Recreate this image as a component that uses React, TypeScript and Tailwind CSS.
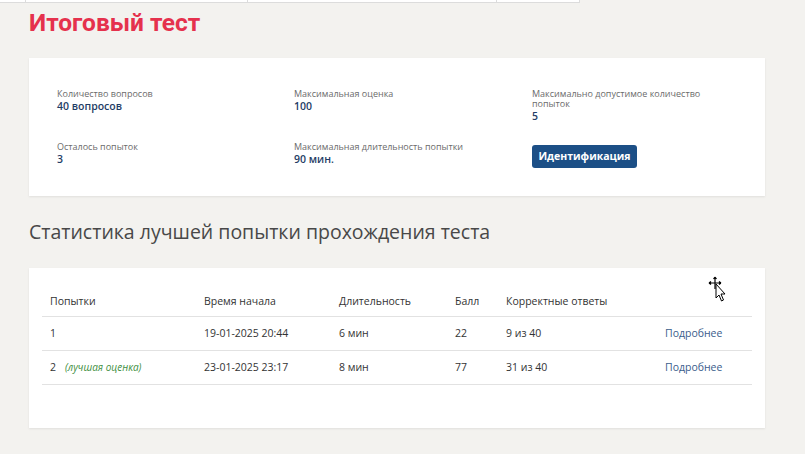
import React from 'react';

const infoItems = [
  { label: 'Количество вопросов', value: '40 вопросов' },
  { label: 'Максимальная оценка', value: '100' },
  { label: 'Максимально допустимое количество попыток', value: '5' },
  { label: 'Осталось попыток', value: '3' },
  { label: 'Максимальная длительность попытки', value: '90 мин.' },
];

const attempts = [
  { n: '1', best: false, start: '19-01-2025 20:44', dur: '6 мин', score: '22', correct: '9 из 40' },
  { n: '2', best: true, start: '23-01-2025 23:17', dur: '8 мин', score: '77', correct: '31 из 40' },
];

const InfoCell: React.FC<{ label: string; value: string }> = ({ label, value }) => (
  <div className="flex flex-col">
    <span className="text-[9px] leading-[10px] text-[#6b6b6b] w-[180px]">{label}</span>
    <span className="mt-[1px] text-[10.5px] leading-[12px] font-semibold text-[#1f3d66]">{value}</span>
  </div>
);

const App: React.FC = () => {
  return (
    <div className="relative w-[805px] h-[454px] overflow-hidden bg-[#f3f2ef]" style={{ fontFamily: '"Open Sans", "Noto Sans", sans-serif' }}>
      {/* top strip from the page above */}
      <div className="flex h-[3px] w-[580px] bg-white border-b border-[#dcdcdc]">
        <div className="w-[26px] border-r border-[#dcdcdc]" />
        <div className="w-[222px] border-r border-[#dcdcdc]" />
        <div className="w-[249px] border-r border-[#dcdcdc]" />
        <div className="w-[83px] border-r border-[#dcdcdc]" />
      </div>

      <div className="pl-[29px] w-[765px]">
        <h1
          className="mt-[6px] text-[24.5px] leading-[28px] font-bold text-[#e5314d]"
          style={{ fontFamily: '"Liberation Sans Narrow", "Roboto", sans-serif' }}
        >
          Итоговый тест
        </h1>

        <div className="mt-[21px] bg-white shadow-[0_1px_2px_rgba(0,0,0,0.08)] pl-[28px] pt-[31px] pb-[28px]">
          <div className="grid grid-cols-[237px_238px_200px] gap-y-[20px]">
            <InfoCell {...infoItems[0]} />
            <InfoCell {...infoItems[1]} />
            <InfoCell {...infoItems[2]} />
            <InfoCell {...infoItems[3]} />
            <InfoCell {...infoItems[4]} />
            <div>
              <button className="w-[105px] h-[23px] rounded-[3px] bg-[#1c4f86] text-white text-[10.5px] font-bold">
                Идентификация
              </button>
            </div>
          </div>
        </div>

        <h2 className="mt-[24px] text-[19.5px] leading-[24px] text-[#484848]">
          Статистика лучшей попытки прохождения теста
        </h2>

        <div className="mt-[24px] bg-white shadow-[0_1px_2px_rgba(0,0,0,0.08)] px-[13px] pt-[20px] pb-[43px]">
          <table className="w-full border-collapse text-[10.5px] text-[#333]">
            <thead>
              <tr className="h-[28px] border-b border-[#e2e2e2] text-left">
                <th className="font-normal pl-[8px] w-[162px]">Попытки</th>
                <th className="font-normal w-[135px]">Время начала</th>
                <th className="font-normal w-[116px]">Длительность</th>
                <th className="font-normal w-[51px]">Балл</th>
                <th className="font-normal w-[159px]">Корректные ответы</th>
                <th className="font-normal" />
              </tr>
            </thead>
            <tbody>
              {attempts.map((a) => (
                <tr key={a.n} className="h-[34px] border-b border-[#e2e2e2]">
                  <td className="pl-[8px]">
                    {a.n}
                    {a.best && <span className="ml-[9px] italic text-[10px] text-[#3f8f3f]">(лучшая оценка)</span>}
                  </td>
                  <td>{a.start}</td>
                  <td>{a.dur}</td>
                  <td>{a.score}</td>
                  <td>{a.correct}</td>
                  <td className="text-[#3b5d8c]">Подробнее</td>
                </tr>
              ))}
            </tbody>
          </table>
        </div>
      </div>

      {/* mouse cursor in the screenshot */}
      <svg className="absolute left-[706px] top-[276px]" width="22" height="27" viewBox="0 0 22 27">
        <path d="M9 1 L9 13 M3 7 L15 7 M9 1 L7.5 3 M9 1 L10.5 3 M3 7 L5 5.5 M3 7 L5 8.5 M15 7 L13 5.5 M15 7 L13 8.5" stroke="#000" strokeWidth="1.2" fill="none" />
        <path d="M10 8 L10 22 L13 19 L15.5 25 L17.5 24 L15 18 L19 18 Z" fill="#fff" stroke="#000" strokeWidth="1" />
      </svg>
    </div>
  );
};

export default App;
